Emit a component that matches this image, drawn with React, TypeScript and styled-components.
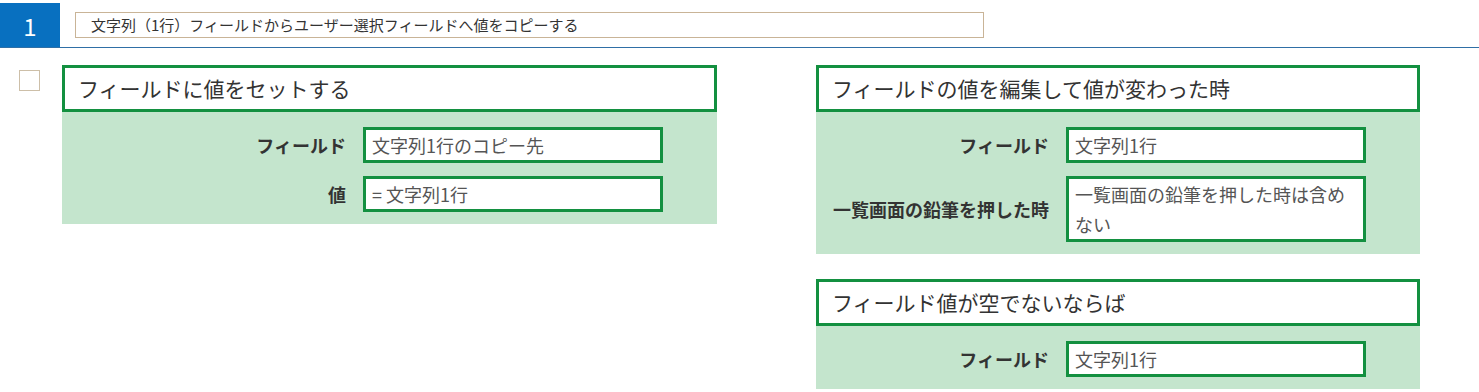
import * as React from 'react';
import styled, { createGlobalStyle } from 'styled-components';

const GlobalStyle = createGlobalStyle`
  html, body {
    margin: 0;
    padding: 0;
    background: #fff;
    font-family: "Noto Sans CJK JP", "Noto Sans", sans-serif;
    color: #333;
  }
`;

const Page = styled.div`
  width: 1479px;
`;

const TopBar = styled.div`
  display: flex;
  align-items: center;
  padding-top: 3px;
  border-bottom: 1px solid #2f6fa6;
`;

const Badge = styled.div`
  width: 60px;
  height: 44px;
  background: #0870c0;
  color: #fff;
  font-size: 24px;
  display: flex;
  align-items: center;
  justify-content: center;
`;

const TitleBox = styled.div`
  margin-left: 15px;
  width: 909px;
  height: 26px;
  box-sizing: border-box;
  border: 1px solid #c9b497;
  padding: 0 15px;
  font-size: 15px;
  line-height: 24px;
  color: #333;
  white-space: nowrap;
`;

const Content = styled.div`
  display: flex;
  align-items: flex-start;
  padding-top: 17px;
`;

const CheckCol = styled.div`
  width: 62px;
  padding: 5px 0 0 19px;
  box-sizing: border-box;
`;

const CheckBox = styled.div`
  width: 21px;
  height: 21px;
  box-sizing: border-box;
  border: 1px solid #cdbfa8;
  background: #fff;
`;

const Column = styled.div<{ $width: number; $mr?: number }>`
  width: ${(p) => p.$width}px;
  margin-right: ${(p) => p.$mr ?? 0}px;
  display: flex;
  flex-direction: column;
  gap: 25px;
`;

const Card = styled.div``;

const CardHeader = styled.div`
  height: 47px;
  box-sizing: border-box;
  border: 3px solid #139040;
  background: #fff;
  padding: 0 13px;
  font-size: 21px;
  line-height: 41px;
  color: #333;
`;

const CardBody = styled.div`
  background: #c4e5cd;
  padding: 15px 54px 12px 0;
  display: flex;
  flex-direction: column;
  gap: 13px;
`;

const Row = styled.div`
  display: flex;
  align-items: center;
`;

const Label = styled.div`
  flex: 1;
  text-align: right;
  padding-right: 17px;
  font-size: 18px;
  font-weight: bold;
  color: #333;
  white-space: nowrap;
`;

const Input = styled.div`
  width: 300px;
  box-sizing: border-box;
  min-height: 36px;
  border: 3px solid #139040;
  background: #fff;
  padding: 0 6px;
  font-size: 18px;
  line-height: 30px;
  color: #555;
`;

type Field = { label: string; value: string };

const FormCard = ({ title, fields }: { title: string; fields: Field[] }) => (
  <Card>
    <CardHeader>{title}</CardHeader>
    <CardBody>
      {fields.map((f) => (
        <Row key={f.label}>
          <Label>{f.label}</Label>
          <Input>{f.value}</Input>
        </Row>
      ))}
    </CardBody>
  </Card>
);

export default function App() {
  return (
    <Page>
      <GlobalStyle />
      <TopBar>
        <Badge>1</Badge>
        <TitleBox>文字列（1行）フィールドからユーザー選択フィールドへ値をコピーする</TitleBox>
      </TopBar>
      <Content>
        <CheckCol>
          <CheckBox />
        </CheckCol>
        <Column $width={655} $mr={99}>
          <FormCard
            title="フィールドに値をセットする"
            fields={[
              { label: 'フィールド', value: '文字列1行のコピー先' },
              { label: '値', value: '= 文字列1行' },
            ]}
          />
        </Column>
        <Column $width={604}>
          <FormCard
            title="フィールドの値を編集して値が変わった時"
            fields={[
              { label: 'フィールド', value: '文字列1行' },
              { label: '一覧画面の鉛筆を押した時', value: '一覧画面の鉛筆を押した時は含めない' },
            ]}
          />
          <FormCard
            title="フィールド値が空でないならば"
            fields={[{ label: 'フィールド', value: '文字列1行' }]}
          />
        </Column>
      </Content>
    </Page>
  );
}
